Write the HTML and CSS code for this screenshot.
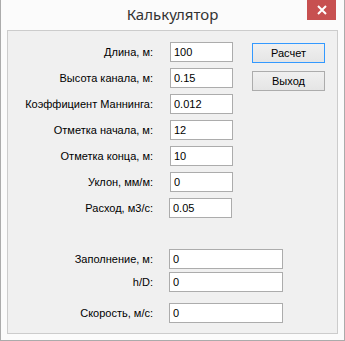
FILE: index.html
```html
<!DOCTYPE html>
<html lang="ru">
<head>
    <meta charset="UTF-8">
    <title>Калькулятор</title>
    <link rel="stylesheet" href="styles.css">
</head>
<body>
    <div class="window">
        <div class="titlebar">
            <span class="title">Калькулятор</span>
            <button class="close" type="button" aria-label="Закрыть">
                <svg width="10" height="10" viewBox="0 0 10 10">
                    <path d="M1 1 L9 9 M9 1 L1 9" stroke="#fff" stroke-width="2" fill="none"/>
                </svg>
            </button>
        </div>

        <div class="panel">
            <div class="top">
                <div class="fields">
                    <label>Длина, м:</label>
                    <input type="text" value="100">
                    <label>Высота канала, м:</label>
                    <input type="text" value="0.15">
                    <label>Коэффициент Маннинга:</label>
                    <input type="text" value="0.012">
                    <label>Отметка начала, м:</label>
                    <input type="text" value="12">
                    <label>Отметка конца, м:</label>
                    <input type="text" value="10">
                    <label>Уклон, мм/м:</label>
                    <input type="text" value="0">
                    <label>Расход, м3/с:</label>
                    <input type="text" value="0.05" class="nudge">
                </div>
                <div class="actions">
                    <button type="button" class="btn btn-default">Расчет</button>
                    <button type="button" class="btn">Выход</button>
                </div>
            </div>

            <div class="results">
                <label>Заполнение, м:</label>
                <input type="text" value="0">
                <label class="hd">h/D:</label>
                <input type="text" value="0" class="hd">
                <label class="speed">Скорость, м/с:</label>
                <input type="text" value="0" class="speed">
            </div>
        </div>
    </div>
</body>
</html>
```

FILE: styles.css
```css
* {
    box-sizing: border-box;
}

body {
    margin: 0;
    background: #fff;
    font-family: "Liberation Sans", Arial, sans-serif;
    font-size: 11px;
    color: #000;
}

.window {
    width: 345px;
    height: 341px;
    background: #fbfbfb;
    border: 1px solid #ababab;
    border-top: none;
    display: flex;
    flex-direction: column;
}

.titlebar {
    position: relative;
    height: 30px;
    flex: none;
    display: flex;
    align-items: center;
    justify-content: center;
}

.title {
    font-family: "Noto Sans", "Open Sans", sans-serif;
    font-size: 15px;
    color: #333;
    margin-top: -3px;
}

.close {
    position: absolute;
    top: 0;
    right: 8px;
    width: 29px;
    height: 20px;
    border: none;
    padding: 0;
    background: #c75050;
    display: flex;
    align-items: center;
    justify-content: center;
}

.panel {
    margin: 0 6px;
    height: 304px;
    background: #f0f0f0;
    border: 1px solid #cccccc;
    padding-top: 11px;
}

.top {
    display: flex;
    align-items: flex-start;
}

.fields,
.results {
    display: grid;
    grid-template-columns: 145px 63px;
    column-gap: 17px;
    row-gap: 6px;
    align-items: center;
}

.fields label,
.results label {
    text-align: right;
    white-space: nowrap;
}

input {
    height: 20px;
    border: 1px solid #acacac;
    background: #fff;
    padding: 0 3px;
    font-family: "Liberation Sans", Arial, sans-serif;
    font-size: 11px;
    color: #000;
    outline: none;
}

.fields input {
    width: 63px;
}

.fields input.nudge {
    margin-left: -1px;
}

.actions {
    display: flex;
    flex-direction: column;
    gap: 8px;
    margin-left: 19px;
    padding-top: 1px;
}

.btn {
    width: 73px;
    height: 20px;
    border: 1px solid #acacac;
    background: linear-gradient(#f0f0f0, #e5e5e5);
    font-family: "Liberation Sans", Arial, sans-serif;
    font-size: 11px;
    color: #000;
    padding: 0;
}

.btn-default {
    border-color: #3399ff;
}

.results {
    grid-template-columns: 145px 114px;
    column-gap: 16px;
    row-gap: 3px;
    margin-top: 31px;
}

.results input {
    width: 114px;
}

.results .speed {
    margin-top: 8px;
}
```
